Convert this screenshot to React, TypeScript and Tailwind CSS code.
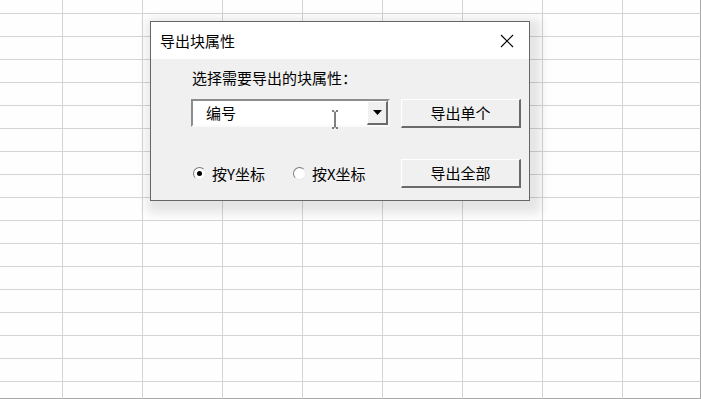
import React from "react";

const colWidths = ["w-[63px]", "w-[80px]", "w-[80px]", "w-[80px]", "w-[80px]", "w-[80px]", "w-[80px]", "w-[80px]", "w-[78px]"];
const rowHeights = ["h-[14px]", ...Array(16).fill("h-[23px]"), "h-[17px]"];

const font = { fontFamily: '"Noto Sans CJK SC", "Noto Sans", sans-serif' };

function Sheet() {
  return (
    <div className="flex flex-col w-[701px] h-[399px] bg-[#fefefe]">
      {rowHeights.map((h, r) => (
        <div key={r} className={`flex ${h}`}>
          {colWidths.map((w, c) => (
            <div
              key={c}
              className={`${w} h-full border-r border-b ${c === colWidths.length - 1 ? "border-r-[#a8a8a8]" : "border-r-[#d4d4d4]"} ${r === rowHeights.length - 1 ? "border-b-[#a8a8a8]" : "border-b-[#d4d4d4]"}`}
            />
          ))}
        </div>
      ))}
    </div>
  );
}

function Button({ label }: { label: string }) {
  return (
    <div className="w-[120px] h-[29px] bg-[#f0f0f0] border-t border-l border-t-white border-l-white border-r-2 border-b-2 border-r-[#6a6a6a] border-b-[#6a6a6a] flex items-center justify-center text-[15px] leading-[18px] text-black">
      {label}
    </div>
  );
}

function Radio({ checked, label }: { checked: boolean; label: string }) {
  return (
    <div className="flex items-center">
      <div className="w-[13px] h-[13px] rounded-full border border-t-[#7a7a7a] border-l-[#7a7a7a] border-r-[#e8e8e8] border-b-[#e8e8e8] bg-white flex items-center justify-center">
        {checked && <div className="w-[5px] h-[5px] rounded-full bg-black" />}
      </div>
      <span className="ml-[6px] text-[15px] leading-[18px] text-black">{label}</span>
    </div>
  );
}

export default function App() {
  return (
    <div className="relative w-[701px] h-[399px] overflow-hidden" style={font}>
      <Sheet />
      <div className="absolute left-[150px] top-[21px] w-[380px] h-[180px] border border-[#666] bg-[#f0f0f0] flex flex-col shadow-[4px_5px_10px_7px_rgba(0,0,0,0.1)]">
        <div className="h-[37px] bg-white flex items-center justify-between pl-[9px] pr-[15px]">
          <span className="text-[15px] leading-[18px] text-black">导出块属性</span>
          <svg width="14" height="14" viewBox="0 0 14 14">
            <path d="M1 1 L13 13 M13 1 L1 13" stroke="#000" strokeWidth="1.1" fill="none" />
          </svg>
        </div>
        <div className="flex flex-col pl-[40px] pt-[11px]">
          <div className="pl-[1px] text-[15px] leading-[16px] text-black">选择需要导出的块属性：</div>
          <div className="flex items-start gap-[11px] mt-[13px]">
            <div className="relative w-[199px] h-[28px] bg-white border-2 border-t-[#8c8c8c] border-l-[#8c8c8c] border-r-[#f6f6f6] border-b-[#fafafa] flex items-center">
              <span className="pl-[13px] flex-1 text-[15px] leading-[18px] text-black">编号</span>
              <div className="w-[21px] h-full bg-[#f0f0f0] border-t border-l border-t-white border-l-white border-r-2 border-b-2 border-r-[#6a6a6a] border-b-[#6a6a6a] flex items-center justify-center">
                <svg width="9" height="5" viewBox="0 0 9 5">
                  <path d="M0 0 H9 L4.5 5 Z" fill="#000" />
                </svg>
              </div>
              <svg className="absolute left-[138px] top-[9px]" width="8" height="19" viewBox="0 0 8 19">
                <path d="M1 1 H3 M5 1 H7 M4 1.5 V17.5 M1 18 H3 M5 18 H7" stroke="#000" strokeWidth="1" fill="none" />
              </svg>
            </div>
            <Button label="导出单个" />
          </div>
          <div className="flex items-center mt-[31px]">
            <div className="w-[210px] flex items-center pl-[2px] gap-[28px]">
              <Radio checked label="按Y坐标" />
              <Radio checked={false} label="按X坐标" />
            </div>
            <Button label="导出全部" />
          </div>
        </div>
      </div>
    </div>
  );
}
